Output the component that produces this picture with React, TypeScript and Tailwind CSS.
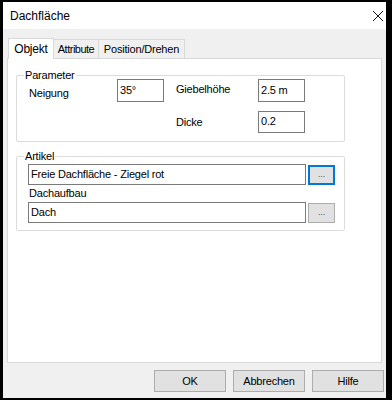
import React from 'react'

const font = { fontFamily: '"Liberation Sans", Arial, sans-serif' }

function Field({ value, className }: { value: string; className: string }) {
  return (
    <div className={`border border-[#7a7a7a] bg-white px-[2px] text-[11px] text-black ${className}`}>
      {value}
    </div>
  )
}

function DotsButton({ focused }: { focused?: boolean }) {
  return (
    <div
      className={`ml-[2px] flex h-[20px] w-[27px] items-center justify-center bg-[#e1e1e1] text-[9px] leading-none text-[#555] ${
        focused ? 'border-2 border-[#0078d7]' : 'border border-[#adadad]'
      }`}
    >
      ...
    </div>
  )
}

function Group({ title, className, children }: { title: string; className: string; children: React.ReactNode }) {
  return (
    <div className={`relative rounded-[2px] border border-[#dcdcdc] ${className}`}>
      <span className="absolute left-[7px] top-[-9px] bg-white px-[1px] leading-[16px]">{title}</span>
      {children}
    </div>
  )
}

export default function App() {
  return (
    <div className="h-[400px] w-[392px] bg-black pb-[2px] pl-[3px] pr-[6px] pt-[2px]" style={font}>
      <div className="flex h-full flex-col bg-[#f0f0f0] text-[11px] tracking-[-0.2px] text-black">
        <div className="flex h-[27px] items-center justify-between bg-white pl-[7px] pr-[2px] tracking-normal">
          <span className="text-[12px]">Dachfläche</span>
          <svg width="12" height="12" viewBox="0 0 12 12">
            <path d="M1 1 L11 11 M11 1 L1 11" stroke="#111" strokeWidth="1" />
          </svg>
        </div>

        <div className="flex flex-1 flex-col px-[4px] pt-[9px]">
          <div className="flex h-[20px] items-end pl-[1px]">
            <div className="relative z-10 -mb-px flex h-[21px] w-[46px] items-center justify-center border border-b-0 border-[#d9d9d9] bg-white text-[12px]">
              Objekt
            </div>
            <div className="flex h-[19px] w-[45px] items-center justify-center border border-b-0 border-l-0 border-[#d9d9d9] tracking-[-0.5px]">
              Attribute
            </div>
            <div className="flex h-[19px] w-[86px] items-center justify-center border border-b-0 border-l-0 border-[#d9d9d9]">
              Position/Drehen
            </div>
          </div>

          <div className="h-[305px] border border-[#d9d9d9] bg-white pl-[8px] pr-[36px] pt-[16px]">
            <Group title="Parameter" className="h-[67px]">
              <div className="flex pl-[12px] pt-[3px]">
                <span className="mt-[6px] w-[88px]">Neigung</span>
                <Field value="35°" className="h-[23px] w-[47px] leading-[20px]" />
                <div className="ml-[12px] flex flex-col">
                  <div className="flex">
                    <span className="mt-[2px] w-[82px]">Giebelhöhe</span>
                    <Field value="2.5 m" className="h-[23px] w-[47px] leading-[20px]" />
                  </div>
                  <div className="mt-[9px] flex">
                    <span className="mt-[3px] w-[82px]">Dicke</span>
                    <Field value="0.2" className="h-[22px] w-[47px] leading-[19px]" />
                  </div>
                </div>
              </div>
            </Group>

            <Group title="Artikel" className="mt-[14px] h-[75px]">
              <div className="flex flex-col pl-[11px] pt-[7px]">
                <div className="flex items-center">
                  <Field value="Freie Dachfläche - Ziegel rot" className="h-[21px] w-[278px] leading-[19px]" />
                  <DotsButton focused />
                </div>
                <span className="pl-[1px] leading-[17px]">Dachaufbau</span>
                <div className="flex items-center">
                  <Field value="Dach" className="h-[21px] w-[278px] leading-[19px]" />
                  <DotsButton />
                </div>
              </div>
            </Group>
          </div>

          <div className="-mr-[2px] flex justify-end gap-[7px] pt-[7px]">
            {['OK', 'Abbrechen', 'Hilfe'].map((label) => (
              <div
                key={label}
                className="flex h-[22px] w-[72px] items-center justify-center border border-[#adadad] bg-[#e1e1e1]"
              >
                {label}
              </div>
            ))}
          </div>
        </div>
      </div>
    </div>
  )
}
